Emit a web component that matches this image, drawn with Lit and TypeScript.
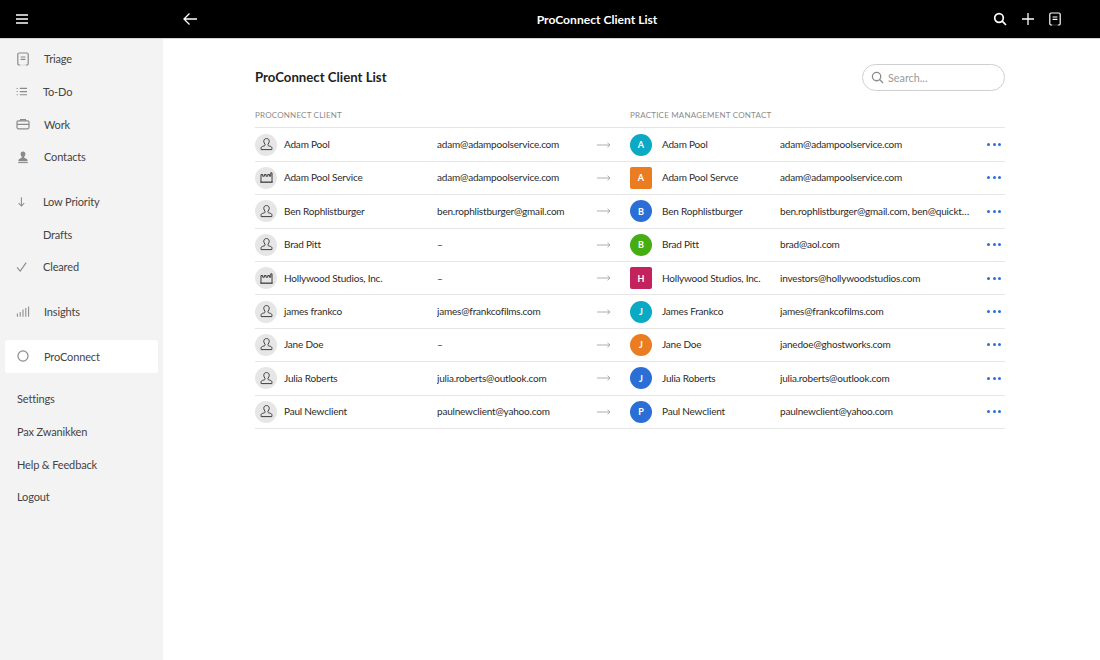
import { LitElement, html, css, svg } from "lit";
import { customElement } from "lit/decorators.js";

const note = svg`<path d="M5.200 2.500h9.600a1.700 1.700 0 0 1 1.700 1.700v11.600a1.700 1.700 0 0 1-1.700 1.700H5.200a1.700 1.700 0 0 1-1.700-1.700V4.200a1.700 1.700 0 0 1 1.700-1.700z" fill="none" stroke="currentColor" stroke-width="1.500"/><path d="M7 7.500h6M7 10.500h6" stroke="currentColor" stroke-width="1.400" fill="none"/><path d="M6.500 17.500h7" stroke="var(--gap,#f3f3f3)" stroke-width="2"/>`;

const person = svg`<path d="M10 3c-2 0-3.200 1.400-3.200 3.200 0 1.500.7 2.500 1.300 3.300.5.7.2 1.800-.6 2.100-1.200.4-3.500.6-3.800 2-.2.8 0 2.400 0 2.400h12.600s.2-1.600 0-2.400c-.3-1.400-2.600-1.600-3.800-2-.8-.3-1.100-1.400-.6-2.100.6-.8 1.300-1.800 1.300-3.300C13.200 4.400 12 3 10 3z" fill="none" stroke="#3a3a3a" stroke-width="1.150"/>`;
const factory = svg`<path d="M3.500 15.500V6.500h2v2h2v-2h2v2h2v-2h2v2h1.500v-4h1.500v11" fill="none" stroke="#3a3a3a" stroke-width="1.150"/><path d="M2.800 15.500h14.400" stroke="#3a3a3a" stroke-width="1.500"/>`;

type Row = { kind: "p" | "f"; name: string; email: string; letter: string; color: string; square?: boolean; pname: string; pemail: string };
const rows: Row[] = [
  { kind: "p", name: "Adam Pool", email: "adam@adampoolservice.com", letter: "A", color: "#0aa9c4", pname: "Adam Pool", pemail: "adam@adampoolservice.com" },
  { kind: "f", name: "Adam Pool Service", email: "adam@adampoolservice.com", letter: "A", color: "#ea7c22", square: true, pname: "Adam Pool Servce", pemail: "adam@adampoolservice.com" },
  { kind: "p", name: "Ben Rophlistburger", email: "ben.rophlistburger@gmail.com", letter: "B", color: "#2b6fd6", pname: "Ben Rophlistburger", pemail: "ben.rophlistburger@gmail.com, ben@quicktravel.com" },
  { kind: "p", name: "Brad Pitt", email: "–", letter: "B", color: "#45ad12", pname: "Brad Pitt", pemail: "brad@aol.com" },
  { kind: "f", name: "Hollywood Studios, Inc.", email: "–", letter: "H", color: "#c2235c", square: true, pname: "Hollywood Studios, Inc.", pemail: "investors@hollywoodstudios.com" },
  { kind: "p", name: "james frankco", email: "james@frankcofilms.com", letter: "J", color: "#0aa9c4", pname: "James Frankco", pemail: "james@frankcofilms.com" },
  { kind: "p", name: "Jane Doe", email: "–", letter: "J", color: "#ea7c22", pname: "Jane Doe", pemail: "janedoe@ghostworks.com" },
  { kind: "p", name: "Julia Roberts", email: "julia.roberts@outlook.com", letter: "J", color: "#2b6fd6", pname: "Julia Roberts", pemail: "julia.roberts@outlook.com" },
  { kind: "p", name: "Paul Newclient", email: "paulnewclient@yahoo.com", letter: "P", color: "#2b6fd6", pname: "Paul Newclient", pemail: "paulnewclient@yahoo.com" },
];

const ic = (body: unknown) => html`<svg class="nav-icon" viewBox="0 0 20 20">${body}</svg>`;
const navIcons = {
  triage: note,
  todo: svg`<path d="M2 5.500h1.500M2 9.500h1.500M2 13.500h1.500" stroke="#8a8a8a" stroke-width="1.300"/><path d="M6 5.500h9M6 9.500h9M6 13.500h9" stroke="#8a8a8a" stroke-width="1.400"/>`,
  work: svg`<rect x="2.500" y="6" width="15" height="10" rx="1.500" fill="none" stroke="currentColor" stroke-width="1.500"/><path d="M7 6V4.500h6V6M2.500 10.500h15" fill="none" stroke="currentColor" stroke-width="1.500"/>`,
  contacts: svg`<path d="M10 3c-1.900 0-3 1.300-3 3 0 1.600.8 2.700 1.300 3.500.4.600.3 1.500-.3 1.800-1.200.6-3.400.9-3.600 2.300l-.1 1.600h11.400l-.1-1.600c-.2-1.400-2.400-1.700-3.600-2.300-.6-.3-.7-1.200-.3-1.800C12.200 8.700 13 7.600 13 6c0-1.700-1.100-3-3-3z" fill="#8a8a8a"/><path d="M4 17h12" stroke="#8a8a8a" stroke-width="1.300"/>`,
  low: svg`<path d="M8 4v11M4.500 11.500 8 15l3.500-3.500" fill="none" stroke="currentColor" stroke-width="1.300"/>`,
  check: svg`<path d="M2.500 10.500 6.500 15 14 4.500" fill="none" stroke="currentColor" stroke-width="1.400"/>`,
  insights: svg`<path d="M3 12v4M6.500 10v6M10 7v9M13.500 5v11M17 3v13" stroke="currentColor" stroke-width="1.300"/>`,
  ring: svg`<circle cx="10" cy="10" r="6.300" fill="none" stroke="currentColor" stroke-width="1.500"/>`,
};

@customElement("app-root")
export class AppRoot extends LitElement {
  static styles = css`
    :host { display: block; width: 1100px; height: 660px; overflow: hidden; background: #fff; font-family: Lato, sans-serif; color: #2b2b2b; }
    .top { height: 38px; background: #000; color: #fff; display: flex; align-items: center; border-bottom: 1px solid #d4d4d4; }
    .top svg { display: block; flex: none; }
    .menu { margin-left: 16px; width: 12px; height: 12px; }
    .back { margin-left: 154px; width: 16px; height: 14px; }
    .title { width: 798px; text-align: center; font-size: 12.100px; font-weight: 700; flex: none; }
    .actions { display: flex; gap: 14px; align-items: center; margin-left: -3px; }
    .actions svg { width: 14px; height: 14px; }
    .actions .note { --gap: #000; width: 16px; height: 16px; margin-left: -2px; }
    .body { display: flex; height: 621px; }
    .side { width: 163px; flex: none; background: #f3f3f3; padding-top: 3.700px; box-sizing: border-box; font-size: 11px; letter-spacing: -0.15px; color: #444; }
    .nav { height: 32.600px; display: flex; align-items: center; padding-left: 17px; }
    .nav-icon { width: 16px; height: 16px; color: #8a8a8a; flex: none; margin: 0 12px 0 -2px; }
    .nudge .nav-icon { margin-right: 13px; }
    .nav.sel { background: #fff; margin: 11.400px 5px 0; height: 33px; padding-left: 12px; border-radius: 3px; }
    .s1 { margin-top: 12.200px; }
    .s2 { margin-top: 12.600px; }
    .s4 { margin-top: 10px; }
    .spacer { width: 16px; margin: 0 12px 0 -2px; flex: none; }
    .main { flex: 1; padding: 24px 95px 0 92px; min-width: 0; }
    .head { display: flex; justify-content: space-between; align-items: center; height: 28px; }
    h1 { margin: 0; font-size: 13.200px; font-weight: 700; color: #222; }
    .search { width: 143px; height: 27px; box-sizing: border-box; border: 1px solid #cfcfcf; border-radius: 14px; display: flex; align-items: center; padding-left: 8px; gap: 4px; color: #9a9a9a; font-size: 10.800px; }
    .search svg { width: 13px; height: 13px; }
    .cols { display: grid; grid-template-columns: 375px 1fr; margin-top: 13.400px; height: 24px; padding-bottom: 1px; align-items: center; font-size: 8px; color: #8b8b8b; letter-spacing: 0.2px; border-bottom: 1px solid #e6e6e6; box-sizing: border-box; }
    .row { display: grid; grid-template-columns: 22px 160px 160px 33px 22px 128px 192px 1fr; height: 33.400px; align-items: center; font-size: 10px; letter-spacing: -0.2px; color: #2b2b2b; border-bottom: 1px solid #e6e6e6; box-sizing: border-box; }
    .row > * { min-width: 0; }
    .av { width: 22px; height: 22px; border-radius: 50%; background: #e6e6e6; display: flex; align-items: center; justify-content: center; }
    .av svg { width: 17px; height: 17px; }
    .av.c { color: #fff; font-size: 9px; font-weight: 700; letter-spacing: 0; }
    .av.sq { border-radius: 2px; }
    .nm { padding: 0 0 1px 7px; white-space: nowrap; }
    .pn { padding: 0 0 1px 10px; white-space: nowrap; }
    .em { padding-bottom: 1px; white-space: nowrap; overflow: hidden; text-overflow: ellipsis; }
    .arrow svg { display: block; width: 14px; height: 6px; }
    .dots { display: flex; gap: 2.500px; justify-content: flex-end; padding-right: 4px; }
    .dots i { width: 3px; height: 3px; border-radius: 50%; background: #2b6fd6; display: block; }
  `;

  private nav(label: string, icon: unknown, cls = "") {
    return html`<div class="nav ${cls}">${icon ? ic(icon) : html`<span class="spacer"></span>`}<span>${label}</span></div>`;
  }

  render() {
    return html`
      <div class="top">
        <svg class="menu" viewBox="0 0 12 12"><path d="M0 2h12M0 6h12M0 10h12" stroke="#fff" stroke-width="1.500"/></svg>
        <svg class="back" viewBox="0 0 16 14"><path d="M15 7H2M7.500 1.500 2 7l5.500 5.500" fill="none" stroke="#fff" stroke-width="1.300"/></svg>
        <div class="title">ProConnect Client List</div>
        <div class="actions">
          <svg viewBox="0 0 14 14"><circle cx="6" cy="6" r="4.300" fill="none" stroke="#fff" stroke-width="1.700"/><path d="M9.200 9.200 13 13" stroke="#fff" stroke-width="1.700"/></svg>
          <svg viewBox="0 0 14 14"><path d="M7 1v12M1 7h12" stroke="#fff" stroke-width="1.300"/></svg>
          <svg class="note" viewBox="0 0 20 20">${note}</svg>
        </div>
      </div>
      <div class="body">
        <aside class="side">
          ${this.nav("Triage", navIcons.triage, "nudge")}
          ${this.nav("To-Do", navIcons.todo)}
          ${this.nav("Work", navIcons.work, "nudge")}
          ${this.nav("Contacts", navIcons.contacts, "nudge")}
          ${this.nav("Low Priority", navIcons.low, "s1")}
          ${this.nav("Drafts", null)}
          ${this.nav("Cleared", navIcons.check)}
          ${this.nav("Insights", navIcons.insights, "s2 nudge")}
          ${this.nav("ProConnect", navIcons.ring, "sel nudge")}
          <div class="nav s4">Settings</div>
          <div class="nav">Pax Zwanikken</div>
          <div class="nav">Help &amp; Feedback</div>
          <div class="nav">Logout</div>
        </aside>
        <main class="main">
          <div class="head">
            <h1>ProConnect Client List</h1>
            <div class="search">
              <svg viewBox="0 0 14 14"><circle cx="6" cy="6" r="4.500" fill="none" stroke="#8a8a8a" stroke-width="1.400"/><path d="M9.300 9.300 13 13" stroke="#8a8a8a" stroke-width="1.400"/></svg>
              <span>Search...</span>
            </div>
          </div>
          <div class="cols"><span>PROCONNECT CLIENT</span><span>PRACTICE MANAGEMENT CONTACT</span></div>
          ${rows.map((r) => html`
            <div class="row">
              <div class="av"><svg viewBox="0 0 20 20">${r.kind === "p" ? person : factory}</svg></div>
              <div class="nm">${r.name}</div>
              <div class="em">${r.email}</div>
              <div class="arrow"><svg viewBox="0 0 14 6"><path d="M0 3h13M10.500 .8 13 3l-2.500 2.200" fill="none" stroke="#a5a5a5" stroke-width=".9"/></svg></div>
              <div class="av c ${r.square ? "sq" : ""}" style="background:${r.color}">${r.letter}</div>
              <div class="pn">${r.pname}</div>
              <div class="em">${r.pemail}</div>
              <div class="dots"><i></i><i></i><i></i></div>
            </div>`)}
        </main>
      </div>
    `;
  }
}
